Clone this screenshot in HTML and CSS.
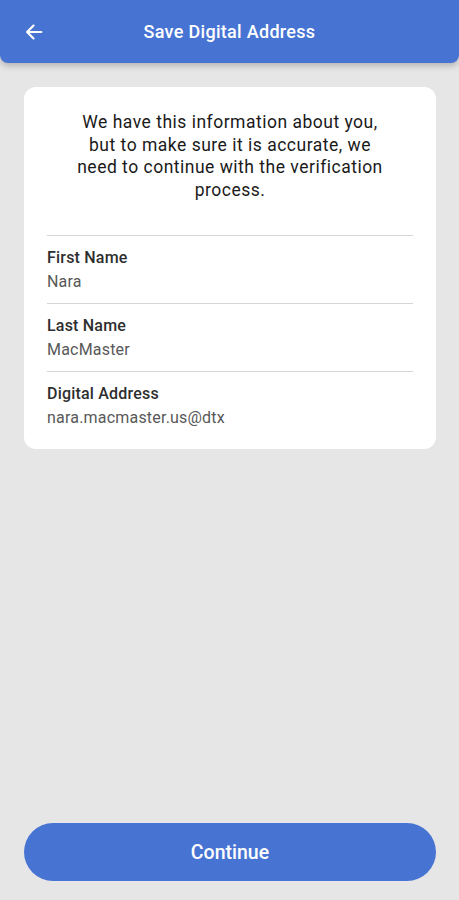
FILE: index.html
```html
<!DOCTYPE html>
<html>
<head>
<meta charset="utf-8">
<link rel="stylesheet" href="styles.css">
</head>
<body>
<div class="app">
  <header class="topbar">
    <button class="back" aria-label="Back">
      <svg width="22" height="22" viewBox="0 0 24 24"><path d="M20 12H5M11.5 5L4.5 12l7 7" fill="none" stroke="#fff" stroke-width="2.4" stroke-linecap="round" stroke-linejoin="round"/></svg>
    </button>
    <h1 class="title">Save Digital Address</h1>
  </header>
  <main class="content">
    <section class="card">
      <p class="intro">We have this information about you, but to make sure it is accurate, we need to continue with the verification process.</p>
      <div class="fields">
        <div class="field">
          <div class="label">First Name</div>
          <div class="value">Nara</div>
        </div>
        <div class="field">
          <div class="label">Last Name</div>
          <div class="value">MacMaster</div>
        </div>
        <div class="field">
          <div class="label">Digital Address</div>
          <div class="value">nara.macmaster.us@dtx</div>
        </div>
      </div>
    </section>
  </main>
  <footer class="footer">
    <button class="continue">Continue</button>
  </footer>
</div>
</body>
</html>
```
FILE: styles.css
```css
* { box-sizing: border-box; }
html, body { margin: 0; padding: 0; }
body {
  background: #e6e6e6;
  font-family: Roboto, "Noto Sans", sans-serif;
  color: #1c1c1c;
}
.app {
  height: 900px;
  display: flex;
  flex-direction: column;
}
.topbar {
  height: 63px;
  background: #4774d3;
  border-radius: 0 0 8px 8px;
  box-shadow: 0 3px 6px rgba(0,0,0,0.22);
  display: flex;
  align-items: center;
  position: relative;
  flex-shrink: 0;
}
.back {
  background: none;
  border: 0;
  padding: 0;
  margin-left: 22px;
  width: 24px;
  height: 24px;
  display: flex;
  align-items: center;
  justify-content: center;
}
.title {
  position: absolute;
  left: 0; right: 0;
  margin: 0;
  text-align: center;
  font-size: 18px;
  letter-spacing: 0.3px;
  font-weight: 500;
  color: #fff;
  pointer-events: none;
}
.content {
  flex: 1;
  padding: 24px 23px 0 24px;
}
.card {
  background: #fff;
  border-radius: 12px;
  padding: 24px 23px 10px 23px;
}
.intro {
  margin: 0 0 34px;
  text-align: center;
  font-size: 17.5px;
  letter-spacing: 0.5px;
  line-height: 22.5px;
  color: #1a1a1a;
  padding: 0 24px;
}
.field {
  border-top: 1.5px solid #d6d6d6;
  padding: 12px 0 10px;
}
.label {
  font-size: 16px;
  letter-spacing: 0.2px;
  line-height: 20px;
  font-weight: 500;
  color: #2e2e2e;
}
.value {
  font-size: 16px;
  letter-spacing: 0.2px;
  line-height: 22px;
  margin-top: 3px;
  color: #585858;
}
.footer {
  padding: 0 23px 19px 24px;
}
.continue {
  width: 100%;
  height: 58px;
  border: 0;
  border-radius: 29px;
  background: #4774d3;
  color: #fff;
  font-family: Roboto, sans-serif;
  font-size: 19.5px;
  font-weight: 500;
}
```
